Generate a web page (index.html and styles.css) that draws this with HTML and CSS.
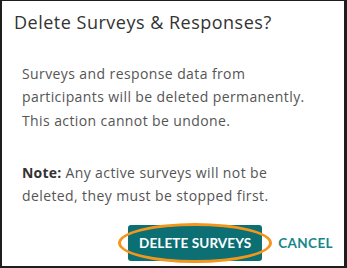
FILE: index.html
```html
<!DOCTYPE html>
<html>
<head>
<meta charset="utf-8">
<link rel="stylesheet" href="styles.css">
</head>
<body>
<div class="dialog">
  <h1 class="title">Delete Surveys &amp; Responses?</h1>
  <div class="content">
    <p class="para">Surveys and response data from participants will be deleted permanently. This action cannot be undone.</p>
    <p class="para"><strong>Note:</strong> Any active surveys will not be deleted, they must be stopped first.</p>
  </div>
  <div class="actions">
    <div class="btn-wrap">
      <button class="btn-primary">DELETE SURVEYS</button>
      <span class="highlight"></span>
    </div>
    <button class="btn-link">CANCEL</button>
  </div>
</div>
</body>
</html>
```
FILE: styles.css
```css
html, body {
  margin: 0;
  padding: 0;
  background: #fff;
}
.dialog {
  box-sizing: border-box;
  width: 347px;
  height: 268px;
  border-style: solid;
  border-color: #1e1e1e;
  border-width: 1px 3px 2px 2px;
  font-family: "Open Sans", Lato, sans-serif;
  display: flex;
  flex-direction: column;
}
.title {
  margin: 0;
  padding: 9px 0 0 12px;
  font-size: 18px;
  font-weight: 400;
  line-height: 24px;
  letter-spacing: 0.5px;
  color: #333;
}
.content {
  padding: 28px 0 0 20px;
  width: 292px;
}
.para {
  margin: 0;
  font-size: 14px;
  line-height: 23.3px;
  letter-spacing: 0.4px;
  color: #555;
}
.para + .para {
  margin-top: 29px;
}
.para strong {
  color: #333;
  font-weight: 700;
  letter-spacing: 0.2px;
}
.actions {
  margin-top: auto;
  display: flex;
  align-items: center;
  justify-content: flex-end;
  padding: 0 11px 5px 0;
  gap: 16px;
}
.btn-wrap {
  position: relative;
}
.btn-primary {
  display: block;
  width: 134px;
  height: 36px;
  border: 0;
  border-radius: 3px;
  background: #0b6f74;
  color: #fff;
  font-family: Lato, sans-serif;
  font-weight: 700;
  font-size: 13.5px;
  letter-spacing: 0.1px;
  padding: 0;
}
.highlight {
  position: absolute;
  left: -10px;
  right: -10px;
  top: -2px;
  bottom: -2px;
  border: 3px solid #f3961c;
  border-radius: 50%;
}
.btn-link {
  border: 0;
  background: none;
  padding: 0;
  color: #17858a;
  font-family: Lato, sans-serif;
  font-weight: 700;
  font-size: 13.5px;
  letter-spacing: 0.4px;
}
```
